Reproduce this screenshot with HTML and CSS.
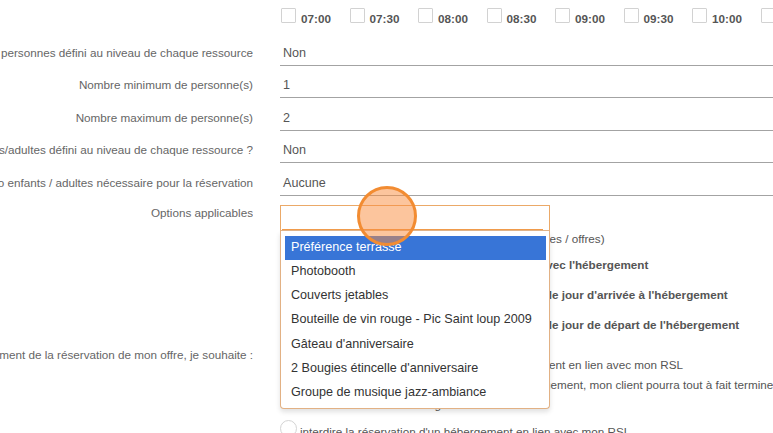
FILE: index.html
```html
<!DOCTYPE html>
<html lang="fr">
<head>
    <meta charset="UTF-8">
    <meta name="viewport" content="width=device-width, initial-scale=1.0">
    <title>Paramètres de l'offre</title>
    <link rel="stylesheet" href="styles.css">
</head>
<body>

    <div class="page">

        <div class="row">
            <div class="label"></div>
            <div class="times">
                <label class="time"><span class="box"></span><span class="time-text">07:00</span></label>
                <label class="time"><span class="box"></span><span class="time-text">07:30</span></label>
                <label class="time"><span class="box"></span><span class="time-text">08:00</span></label>
                <label class="time"><span class="box"></span><span class="time-text">08:30</span></label>
                <label class="time"><span class="box"></span><span class="time-text">09:00</span></label>
                <label class="time"><span class="box"></span><span class="time-text">09:30</span></label>
                <label class="time"><span class="box"></span><span class="time-text">10:00</span></label>
                <label class="time"><span class="box"></span><span class="time-text">10:30</span></label>
            </div>
        </div>

        <div class="row">
            <div class="label">Nombre de personnes défini au niveau de chaque ressource</div>
            <div class="field">Non</div>
        </div>
        <div class="row">
            <div class="label">Nombre minimum de personne(s)</div>
            <div class="field">1</div>
        </div>
        <div class="row">
            <div class="label">Nombre maximum de personne(s)</div>
            <div class="field">2</div>
        </div>
        <div class="row">
            <div class="label">Ratio enfants/adultes défini au niveau de chaque ressource ?</div>
            <div class="field">Non</div>
        </div>
        <div class="row">
            <div class="label">Ratio enfants / adultes nécessaire pour la réservation</div>
            <div class="field">Aucune</div>
        </div>

        <div class="row row-options">
            <div class="label label-top">Options applicables</div>
            <div class="value">
                <div class="select">
                    <div class="select-box"><div class="select-input"></div></div>
                    <ul class="select-list">
                        <li class="active">Préférence terrasse</li>
                        <li>Photobooth</li>
                        <li>Couverts jetables</li>
                        <li>Bouteille de vin rouge - Pic Saint loup 2009</li>
                        <li>Gâteau d'anniversaire</li>
                        <li>2 Bougies étincelle d'anniversaire</li>
                        <li>Groupe de musique jazz-ambiance</li>
                    </ul>
                </div>
                <p class="hint">(choisir une ou plusieurs options parmi vos ressources / offres)</p>
                <label class="check"><span class="box"></span>Option valable uniquement en réservation, avec l'hébergement</label>
                <label class="check"><span class="box"></span>Option valable uniquement pour réservation le jour d'arrivée à l'hébergement</label>
                <label class="check"><span class="box"></span>Option valable uniquement pour réservation le jour de départ de l'hébergement</label>
            </div>
        </div>

        <div class="row row-radios">
            <div class="label label-top">Au moment de la réservation de mon offre, je souhaite :</div>
            <div class="value radios">
                <label class="radio"><span class="dot"></span><span>obliger la réservation simultanée d'un hébergement en lien avec mon RSL</span></label>
                <label class="radio"><span class="dot"></span><span>proposer sans obliger la réservation d'un hébergement, mon client pourra tout à fait terminer sa réservation sans hébergement</span></label>
                <label class="radio radio-last"><span class="dot"></span><span>interdire la réservation d'un hébergement en lien avec mon RSL</span></label>
            </div>
        </div>

        <span class="click-mark"></span>
    </div>

</body>
</html>
```

FILE: styles.css
```css
body {
    margin: 0;
    overflow: hidden;
    background-color: #fff;
    font-family: "Liberation Sans", Arial, sans-serif;
    font-size: 11.7px;
    color: #555;
}
.page {
    position: relative;
    width: 960px;
}
.row {
    display: grid;
    grid-template-columns: 253px 1fr;
    column-gap: 27px;
}
.label {
    display: flex;
    justify-content: flex-end;
    align-items: flex-end;
    padding-bottom: 5px;
    white-space: nowrap;
    overflow: hidden;
    line-height: 16px;
    color: #666;
}
.label-top {
    align-items: flex-start;
    padding-bottom: 0;
}

/* horaires */
.times {
    display: flex;
    align-items: flex-start;
    height: 33px;
    padding-top: 8px;
    box-sizing: border-box;
}
.time {
    flex: none;
    display: flex;
    align-items: flex-end;
    gap: 5px;
    width: 68.5px;
    height: 15px;
    padding-left: 1px;
    box-sizing: border-box;
    font-weight: bold;
    line-height: 12px;
}
.time-text {
    margin-bottom: -2px;
}
.box {
    flex: none;
    width: 15px;
    height: 15px;
    border: 1px solid #d2d2d2;
    border-radius: 1px;
    box-sizing: border-box;
    background: #fff;
}

/* champs soulignés */
.field {
    display: flex;
    align-items: flex-end;
    height: 32.5px;
    padding: 0 0 4px 3px;
    box-sizing: border-box;
    border-bottom: 1px solid #a3a3a3;
    font-size: 12.6px;
    line-height: 16px;
}

/* options */
.row-options {
    padding-top: 9px;
}
.select {
    position: relative;
    width: 270px;
}
.select-box {
    height: 26px;
    border: 1px solid #eba968;
    border-bottom-color: #e2b58a;
    box-sizing: border-box;
}
.select-input {
    height: 23px;
    margin: 0 6px 0 1px;
    border-bottom: 1px solid #f19c4c;
}
.select-list {
    position: absolute;
    top: 100%;
    left: 0;
    z-index: 2;
    width: 270px;
    margin: 0;
    padding: 5px 3px 2px 4px;
    box-sizing: border-box;
    list-style: none;
    background: #fff;
    border: 1px solid #e2b184;
    border-top: 0;
    border-radius: 0 0 4px 4px;
    box-shadow: 0 3px 5px rgba(0, 0, 0, 0.12);
    font-size: 12.6px;
    color: #333;
}
.select-list li {
    padding: 3px 6px 5px;
    line-height: 16.3px;
    white-space: nowrap;
}
.select-list .active {
    background-color: #3875d7;
    color: #fff;
}
.hint {
    margin: 0;
    line-height: 16px;
    white-space: nowrap;
}
.check {
    display: flex;
    align-items: center;
    gap: 5px;
    height: 30px;
    font-weight: bold;
    white-space: nowrap;
}
.hint + .check {
    margin-top: 3px;
}

/* choix hébergement */
.row-radios .label {
    padding-top: 7px;
}
.radios {
    padding-top: 15px;
}
.radio {
    display: flex;
    align-items: flex-start;
    gap: 3px;
    line-height: 20px;
}
.radio span:last-child {
    max-width: 485px;
}
.radio-last {
    margin-top: 7px;
}
.dot {
    flex: none;
    width: 17px;
    height: 17px;
    margin-top: -2px;
    border: 1px solid #d4d4d4;
    border-radius: 50%;
    box-sizing: border-box;
    background: #fff;
}

/* repère de clic */
.click-mark {
    position: absolute;
    left: 357px;
    top: 186px;
    z-index: 3;
    width: 60px;
    height: 60px;
    box-sizing: border-box;
    border: 3px solid #f28c32;
    border-radius: 50%;
    background: rgba(250, 140, 60, 0.5);
}
```
